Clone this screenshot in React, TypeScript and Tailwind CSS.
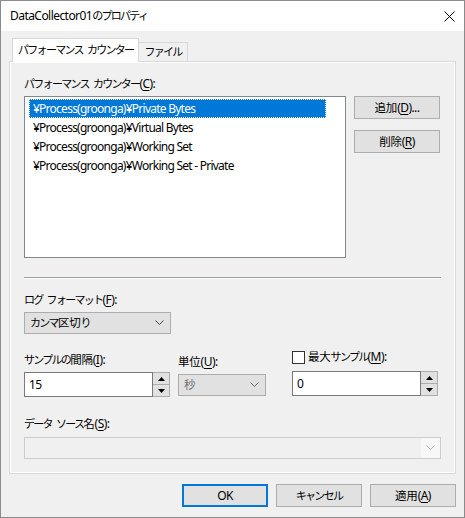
import React from "react";

function J({ children }: { children: React.ReactNode }) {
  return <span className="text-[11px] tracking-[-1.7px]">{children}</span>;
}

function K({ children }: { children: React.ReactNode }) {
  return <span className="text-[11.5px] tracking-[-0.2px]">{children}</span>;
}

function Sp() {
  return <span className="inline-block w-[4px]" />;
}

function U({ children }: { children: React.ReactNode }) {
  return <span className="underline underline-offset-[2px]">{children}</span>;
}

function Chevron({ color = "#444" }: { color?: string }) {
  return (
    <svg width="9" height="6" viewBox="0 0 9 6">
      <path d="M0.5 0.5L4.5 4.5L8.5 0.5" fill="none" stroke={color} strokeWidth="1" />
    </svg>
  );
}

function Spin() {
  return (
    <div className="flex flex-col w-[17px] h-[25px] border border-[#adadad] border-l-0 bg-[#e1e1e1]">
      <div className="flex-1 flex items-center justify-center border-b border-[#adadad]">
        <svg width="7" height="4" viewBox="0 0 7 4"><path d="M0 4L3.5 0L7 4Z" fill="#000" /></svg>
      </div>
      <div className="flex-1 flex items-center justify-center">
        <svg width="7" height="4" viewBox="0 0 7 4"><path d="M0 0L3.5 4L7 0Z" fill="#000" /></svg>
      </div>
    </div>
  );
}

function Btn({ children, w = "w-[86px]", def = false }: { children: React.ReactNode; w?: string; def?: boolean }) {
  return (
    <div
      className={`${w} h-[23px] flex items-center justify-center bg-[#e1e1e1] ${
        def ? "border-2 border-[#0078d7]" : "border border-[#adadad]"
      }`}
    >
      {children}
    </div>
  );
}

export default function App() {
  const rows = [
    "¥Process(groonga)¥Private Bytes",
    "¥Process(groonga)¥Virtual Bytes",
    "¥Process(groonga)¥Working Set",
    "¥Process(groonga)¥Working Set - Private",
  ];
  return (
    <div className="w-[465px] h-[518px] border border-[#8a8a8a] bg-[#f0f0f0] flex flex-col font-['Noto_Sans','Noto_Sans_CJK_JP',sans-serif] tracking-[-0.55px] text-[12px] text-black leading-[16px]">
      {/* title bar */}
      <div className="h-[30px] bg-white flex items-center justify-between pl-[9px] pr-[9px] shrink-0">
        <span>
          DataCollector01<J>のプロパティ</J>
        </span>
        <svg width="11" height="11" viewBox="0 0 11 11">
          <path d="M0.5 0.5L10.5 10.5M10.5 0.5L0.5 10.5" stroke="#000" strokeWidth="1" />
        </svg>
      </div>

      <div className="px-[8px] pt-[7px]">
        {/* tabs */}
        <div className="flex items-end h-[23px] pl-[3px]">
          <div className="h-[24px] px-[5px] pb-[2px] bg-white border border-b-0 border-[#d9d9d9] flex items-center relative z-10 -mb-px">
            <J>パフォーマンス</J>
            <Sp />
            <J>カウンター</J>
          </div>
          <div className="h-[19px] px-[5px] border border-b-0 border-l-0 border-[#d9d9d9] bg-[#f0f0f0] flex items-center">
            <J>ファイル</J>
          </div>
        </div>

        {/* panel */}
        <div className="h-[413px] border border-[#d9d9d9] bg-white">
          <div className="h-full border border-white bg-[#f0f0f0] pl-[13px] pt-[13px] flex flex-col">
            <div>
              <J>パフォーマンス</J>
              <Sp />
              <J>カウンター</J>(<U>C</U>):
            </div>
            <div className="flex mt-[4px]">
              <div className="w-[322px] h-[162px] border border-[#828790] bg-white pt-[2px] pl-[4px] pr-[19px] tracking-[-0.75px]">
                {rows.map((r, i) => (
                  <div
                    key={r}
                    className={`h-[19px] flex items-center pl-[4px] ${
                      i === 0 ? "bg-[#0078d7] text-white outline outline-1 outline-dotted outline-[#fff] -outline-offset-1" : ""
                    }`}
                  >
                    {r}
                  </div>
                ))}
              </div>
              <div className="ml-[8px] flex flex-col gap-[11px]">
                <Btn w="w-[86px]">
                  <K>追加</K>(<U>D</U>)...
                </Btn>
                <Btn w="w-[86px]">
                  <K>削除</K>(<U>R</U>)
                </Btn>
              </div>
            </div>

            <div className="mt-[19px] w-[417px] border-t border-[#a0a0a0] border-b border-b-white" />

            <div className="mt-[13px]">
              <J>ログ</J>
              <Sp />
              <J>フォーマット</J>(<U>F</U>):
            </div>
            <div className="mt-[4px] w-[147px] h-[22px] border border-[#adadad] bg-[#e1e1e1] flex items-center justify-between pl-[5px] pr-[6px]">
              <span>
                <J>カンマ</J>
                <K>区切</K>
                <J>り</J>
              </span>
              <Chevron />
            </div>

            <div className="flex mt-[18px]">
              <div className="w-[146px]">
                <div>
                  <J>サンプルの</J>
                  <K>間隔</K>(<U>I</U>):
                </div>
                <div className="flex mt-[4px]">
                  <div className="w-[129px] h-[25px] border border-[#7a7a7a] bg-white flex items-center pl-[4px]">15</div>
                  <Spin />
                </div>
              </div>
              <div className="ml-[8px] w-[88px] pt-[2px]">
                <div>
                  <K>単位</K>(<U>U</U>):
                </div>
                <div className="mt-[4px] w-[88px] h-[22px] border border-[#adadad] bg-[#e1e1e1] flex items-center justify-between pl-[5px] pr-[6px]">
                  <span className="text-[#6d6d6d]">
                    <K>秒</K>
                  </span>
                  <Chevron color="#666" />
                </div>
              </div>
              <div className="ml-[26px] w-[147px] -mt-[3px]">
                <div className="flex items-center gap-[3px]">
                  <div className="w-[13px] h-[13px] border border-[#333] bg-white" />
                  <span>
                    <K>最大</K>
                    <J>サンプル</J>(<U>M</U>):
                  </span>
                </div>
                <div className="flex mt-[6px]">
                  <div className="w-[129px] h-[25px] border border-[#7a7a7a] bg-white flex items-center pl-[4px]">0</div>
                  <Spin />
                </div>
              </div>
            </div>

            <div className="mt-[19px]">
              <J>データ</J>
              <Sp />
              <J>ソース</J>
              <K>名</K>(<U>S</U>):
            </div>
            <div className="mt-[5px] w-[417px] h-[22px] border border-[#cccccc] bg-[#f0f0f0] flex items-center justify-end">
              <div className="w-[19px] h-full bg-[#f7f7f7] flex items-center justify-center">
                <Chevron color="#bbb" />
              </div>
            </div>
          </div>
        </div>

        {/* buttons */}
        <div className="flex justify-end gap-[8px] mt-[10px]">
          <Btn def>OK</Btn>
          <Btn>
            <J>キャンセル</J>
          </Btn>
          <Btn>
            <K>適用</K>(<U>A</U>)
          </Btn>
        </div>
      </div>
    </div>
  );
}
